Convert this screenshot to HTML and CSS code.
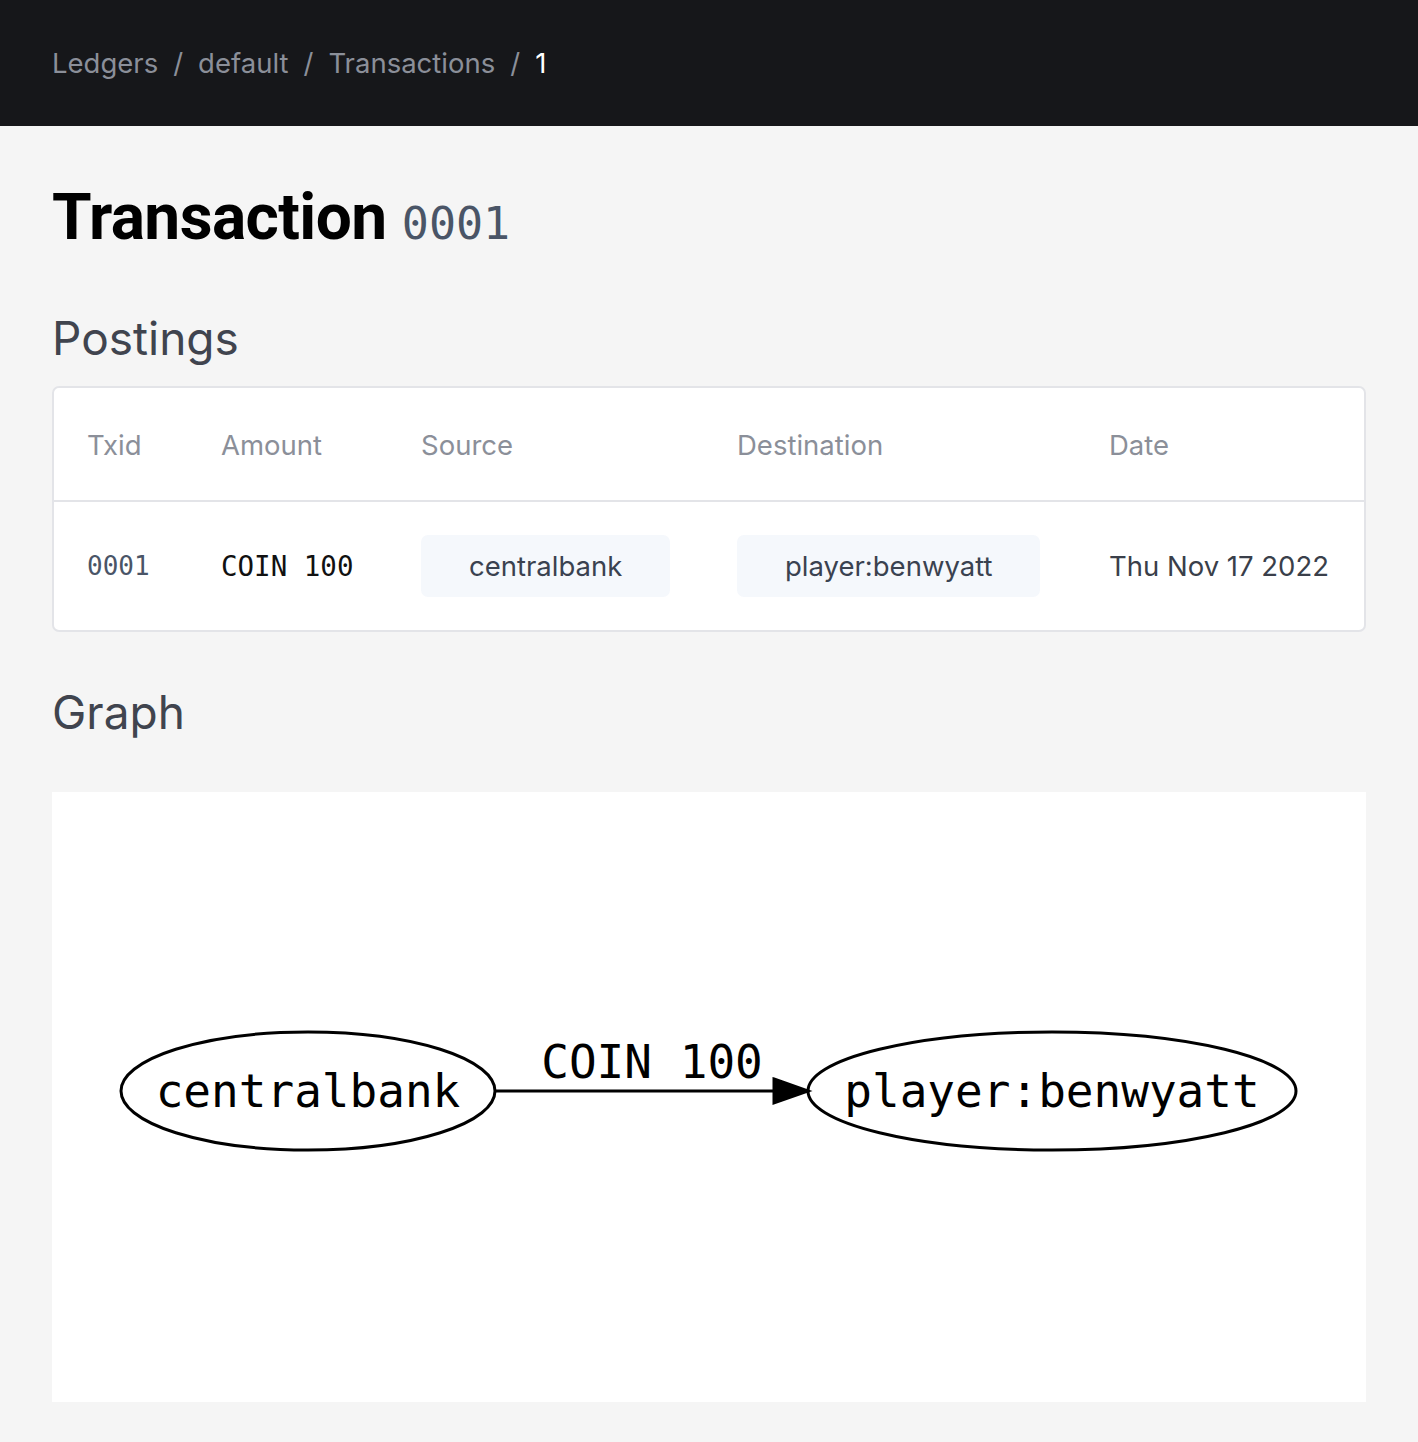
FILE: index.html
```html
<!DOCTYPE html>
<html>
<head>
<meta charset="utf-8">
<link rel="stylesheet" href="styles.css">
</head>
<body>
<header class="topbar">
  <nav class="crumbs">
    <span class="crumb">Ledgers</span><span class="sep">/</span>
    <span class="crumb">default</span><span class="sep">/</span>
    <span class="crumb">Transactions</span><span class="sep">/</span>
    <span class="crumb current">1</span>
  </nav>
</header>
<main class="content">
  <h1 class="title">Transaction <span class="txid">0001</span></h1>
  <h2 class="section">Postings</h2>
  <div class="card">
    <div class="grid head">
      <div>Txid</div><div>Amount</div><div>Source</div><div>Destination</div><div>Date</div>
    </div>
    <div class="grid row">
      <div class="mono muted">0001</div>
      <div class="mono amount">COIN 100</div>
      <div><span class="chip">centralbank</span></div>
      <div><span class="chip">player:benwyatt</span></div>
      <div class="date">Thu Nov 17 2022</div>
    </div>
  </div>
  <h2 class="section graph-title">Graph</h2>
  <div class="graph">
    <svg width="1313" height="610" viewBox="0 0 1313 610">
      <ellipse cx="256" cy="299" rx="187" ry="59" fill="none" stroke="#000" stroke-width="3"/>
      <text x="256" y="315" text-anchor="middle" class="gtext">centralbank</text>
      <line x1="443" y1="299" x2="724" y2="299" stroke="#000" stroke-width="3"/>
      <polygon points="722,287 756,299 722,311" fill="#000" stroke="#000" stroke-width="3"/>
      <text x="600" y="286" text-anchor="middle" class="gtext">COIN 100</text>
      <ellipse cx="1000" cy="299" rx="244" ry="59" fill="none" stroke="#000" stroke-width="3"/>
      <text x="1000" y="315" text-anchor="middle" class="gtext">player:benwyatt</text>
    </svg>
  </div>
</main>
</body>
</html>
```
FILE: styles.css
```css
* { box-sizing: border-box; }
html, body { margin: 0; padding: 0; }
body {
  background: #f5f5f5;
  font-family: Inter, "Noto Sans", sans-serif;
  color: #111;
}
.topbar {
  background: #16171a;
  height: 126px;
  display: flex;
  align-items: center;
  padding-left: 52px;
}
.crumbs {
  display: flex;
  align-items: center;
  font-size: 27.5px;
  color: #8b8f99;
}
.sep { margin: 0 15px; }
.crumb.current { color: #ffffff; }
.content {
  padding: 0 52px;
}
.title {
  margin: 0;
  padding-top: 54px;
  font-family: Roboto, Inter, sans-serif;
  font-weight: 700;
  font-size: 64px;
  line-height: 76px;
  color: #000;
  letter-spacing: -0.6px;
}
.txid {
  font-family: "DejaVu Sans Mono", monospace;
  font-weight: 400;
  font-size: 45px;
  color: #4a5567;
  letter-spacing: 0;
}
.section {
  margin: 0;
  font-weight: 400;
  font-size: 46px;
  line-height: 56px;
  color: #40444e;
  padding-top: 48px;
  padding-bottom: 20px;
}
.card {
  background: #fff;
  border: 2px solid #e3e4e8;
  border-radius: 7px;
}
.grid {
  display: grid;
  grid-template-columns: 134px 200px 316px 372px auto;
  align-items: center;
  padding-left: 33px;
}
.head {
  height: 114px;
  padding-top: 2px;
  font-size: 27.5px;
  color: #8b8f99;
  border-bottom: 2px solid #e3e4e8;
}
.row {
  height: 128px;
  font-size: 27.5px;
  color: #3a3f4a;
}
.mono {
  font-family: "DejaVu Sans Mono", monospace;
  font-size: 26px;
  color: #111;
}
.mono.amount { font-size: 27.5px; }
.mono.muted { color: #4a5567; }
.chip {
  display: inline-flex;
  align-items: center;
  height: 62px;
  padding: 0 48px;
  background: #f5f8fc;
  border-radius: 7px;
  color: #3a4250;
}
.date { color: #3a3f4a; }
.graph-title { padding-top: 52px; padding-bottom: 52px; }
.graph {
  background: #fff;
  height: 610px;
}
.graph svg { display: block; }
.gtext {
  font-family: "DejaVu Sans Mono", monospace;
  font-size: 46px;
  fill: #000;
}
```
